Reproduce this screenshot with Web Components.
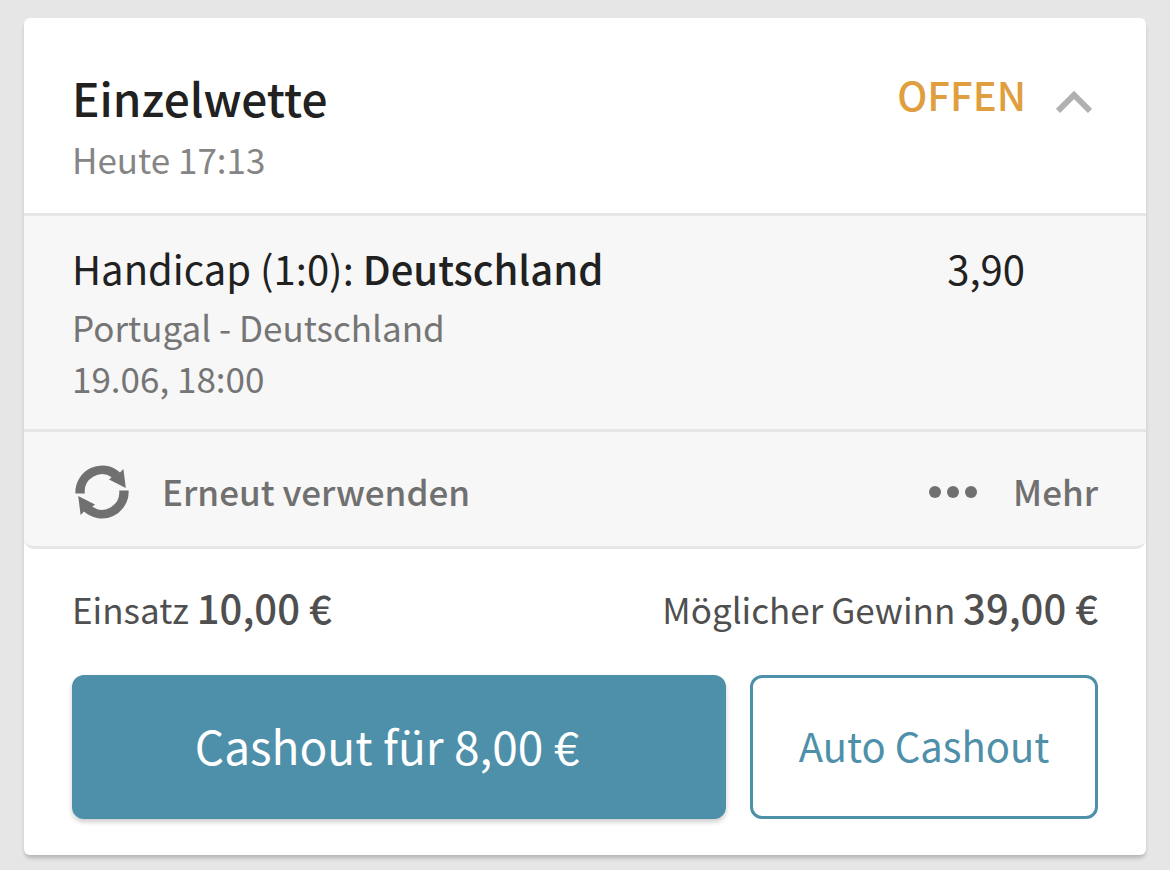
<!DOCTYPE html>
<html lang="de">
<head>
<meta charset="utf-8">
<title>Einzelwette</title>
<style>
body { margin: 0; background: #e6e6e6; font-family: "Noto Sans CJK SC", "Noto Sans", sans-serif; color: #212121; }
</style>
</head>
<body>
<bet-slip>
  <bet-header slot="header" name="Einzelwette" placed="Heute 17:13" status="OFFEN"></bet-header>
  <bet-pick market="Handicap (1:0):" choice="Deutschland" odds="3,90" match="Portugal - Deutschland" kickoff="19.06, 18:00"></bet-pick>
  <bet-tools></bet-tools>
  <bet-totals slot="footer" stake="10,00 €" win="39,00 €"></bet-totals>
  <bet-cashout slot="footer" amount="8,00 €"></bet-cashout>
</bet-slip>
<script>
class Base extends HTMLElement {
  connectedCallback() {
    if (this.shadowRoot) return;
    const root = this.attachShadow({ mode: 'open' });
    root.innerHTML = this.template();
    root.querySelectorAll('[data-attr]').forEach(n => { n.textContent = this.getAttribute(n.dataset.attr); });
  }
}
customElements.define('bet-slip', class extends Base {
  template() { return `<style>
    :host { display: block; margin: 18px 24px 15px; background: #fff; border-radius: 6px; box-shadow: 0 4px 4px -1px rgba(0,0,0,.22); overflow: hidden; }
    main { background: #f7f7f7; border-top: 3px solid #e6e6e6; border-bottom: 3px solid #e6e6e6; border-radius: 0 0 10px 10px; }
    footer { padding: 28px 48px 36px; }
  </style><slot name="header"></slot><main><slot></slot></main><footer><slot name="footer"></slot></footer>`; }
});
customElements.define('bet-header', class extends Base {
  template() { return `<style>
    :host { display: flex; justify-content: space-between; padding: 45px 48px 27px; }
    h1 { margin: 0; font-size: 46px; line-height: 68px; font-weight: 500; }
    p { margin: 0; font-size: 35px; line-height: 55px; color: #858585; }
    .state { display: flex; align-items: flex-start; gap: 30px; }
    strong { font-size: 40px; line-height: 62px; font-weight: 500; color: #e09f3e; }
    button { border: 0; background: none; padding: 27px 6px 0 0; display: flex; }
  </style><div><h1 data-attr="name"></h1><p data-attr="placed"></p></div>
  <div class="state"><strong data-attr="status"></strong>
  <button type="button" aria-label="Einklappen"><svg width="36" height="24" viewBox="0 0 36 24"><path d="M2 21 18 5l16 16" fill="none" stroke="#b0b0b0" stroke-width="6"/></svg></button></div>`; }
});
customElements.define('bet-pick', class extends Base {
  template() { return `<style>
    :host { display: flex; justify-content: space-between; padding: 21px 121px 26px 48px; border-bottom: 3px solid #e6e6e6; }
    h2, .odds { margin: 0 0 2px; font-size: 40px; line-height: 62px; font-weight: 400; }
    b { font-weight: 500; }
    p { margin: 0; font-size: 35px; line-height: 51px; color: #757575; }
  </style><div><h2><span data-attr="market"></span> <b data-attr="choice"></b></h2><p data-attr="match"></p><p data-attr="kickoff"></p></div><span class="odds" data-attr="odds"></span>`; }
});
customElements.define('bet-tools', class extends Base {
  template() {
    const arrow = 'M3.4 31.4A26.7 26.7 0 0 1 48 10.4L51.4 7 53.8 26 37 17.4 39.7 15.2A17.4 17.4 0 0 0 12.8 31.4Z';
    return `<style>
    :host { display: flex; justify-content: space-between; padding: 26px 48px 22px; }
    button { border: 0; background: none; padding: 0; display: flex; align-items: center; gap: 32px; font: 500 35px/66px "Noto Sans CJK SC", sans-serif; color: #707070; }
  </style><button type="button"><svg width="58" height="58" viewBox="0 0 58 58" fill="#707070"><path d="${arrow}"/><path transform="rotate(180 30 30)" d="${arrow}"/></svg>Erneut verwenden</button>
  <button type="button"><svg width="53" height="16" viewBox="0 0 53 16" fill="#707070"><circle cx="7" cy="9" r="6"/><circle cx="25" cy="9" r="6"/><circle cx="43" cy="9" r="6"/></svg>Mehr</button>`; }
});
customElements.define('bet-totals', class extends Base {
  template() { return `<style>
    :host { display: flex; justify-content: space-between; font-size: 35px; line-height: 60px; color: #4f4f4f; }
    b { font-size: 40px; font-weight: 500; }
  </style><span>Einsatz <b data-attr="stake"></b></span><span>Möglicher Gewinn <b data-attr="win"></b></span>`; }
});
customElements.define('bet-cashout', class extends Base {
  template() { return `<style>
    :host { display: grid; grid-template-columns: 654fr 348fr; gap: 24px; padding-top: 36px; }
    button { box-sizing: border-box; height: 144px; border: 3px solid #4e90a9; border-radius: 12px; background: #fff; color: #4e90a9; padding: 0 0 4px; font: 400 40px "Noto Sans CJK SC", sans-serif; }
    .main { background: #4e90a9; color: #fff; font-size: 46px; padding-right: 24px; box-shadow: 0 3px 5px rgba(0,0,0,.2); }
  </style><button type="button" class="main">Cashout für <span data-attr="amount"></span></button><button type="button">Auto Cashout</button>`; }
});
</script>
</body>
</html>
